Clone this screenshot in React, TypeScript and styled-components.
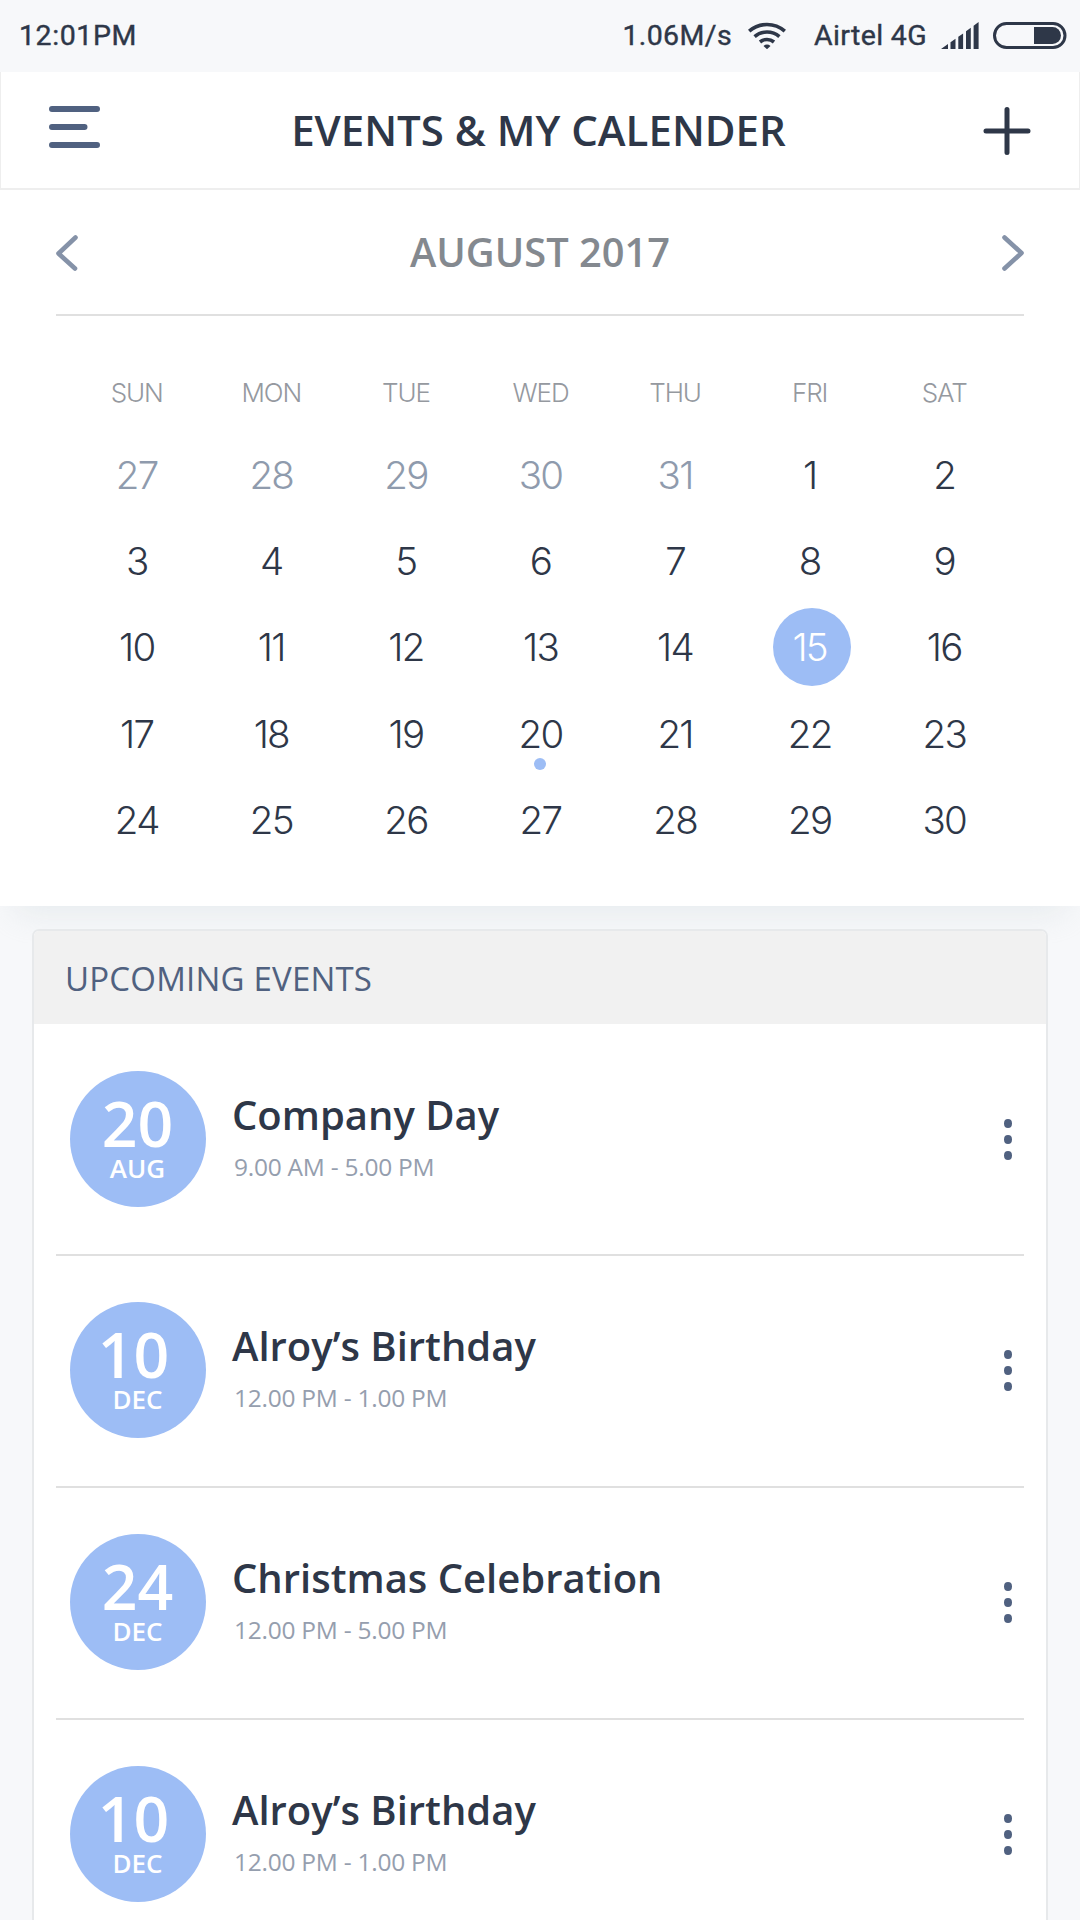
import React from "react";
import styled, { createGlobalStyle } from "styled-components";

const ink = "#2e3748";
const slate = "#506180";
const blue = "#9dbdf5";
const rule = "#e0e0e0";

const GlobalStyle = createGlobalStyle`
  * { box-sizing: border-box; }
  body {
    margin: 0;
    background: #f7f8fa;
    font-family: "Open Sans", "Noto Sans", sans-serif;
    color: ${ink};
  }
  button { border: 0; padding: 0; background: none; display: flex; font: inherit; color: inherit; }
  h1, h2, h3, p { margin: 0; }
`;

const Screen = styled.main`
  width: 1080px;
  height: 1920px;
  overflow: hidden;
  display: flex;
  flex-direction: column;
`;

const StatusBar = styled.div`
  height: 72px;
  flex: none;
  display: flex;
  align-items: center;
  padding: 0 13px 1px 19px;
  font: 400 28.5px/34px Roboto, sans-serif;
  -webkit-text-stroke: 0.4px ${ink};
`;

const Clock = styled.span`
  margin-right: auto;
  padding-top: 1px;
  letter-spacing: 0.6px;
`;

const StatusText = styled.span<{ $gap: number; $tracking: number }>`
  padding-top: 1px;
  margin-right: ${(p) => p.$gap}px;
  letter-spacing: ${(p) => p.$tracking}px;
`;

const StatusIcon = styled.svg<{ $gap: number }>`
  display: block;
  margin-right: ${(p) => p.$gap}px;
`;

const Header = styled.header`
  height: 118px;
  flex: none;
  display: flex;
  align-items: center;
  justify-content: space-between;
  padding: 0 48px;
  background: #fff;
  border: solid #eee;
  border-width: 0 1px 2px;
`;

const Title = styled.h1`
  margin-left: -6px;
  font-size: 42px;
  line-height: 56px;
  font-weight: 600;
`;

const Calendar = styled.section`
  height: 716px;
  flex: none;
  padding: 0 56px;
  background: #fff;
  box-shadow: 0 22px 30px -14px rgba(200, 212, 215, 0.32);
`;

const MonthBar = styled.div`
  height: 126px;
  display: flex;
  align-items: center;
  justify-content: space-between;
  border-bottom: 2px solid ${rule};
`;

const Month = styled.h2`
  font-size: 39.8px;
  line-height: 54px;
  font-weight: 600;
  color: #84898f;
`;

const Grid = styled.div`
  display: grid;
  grid-template-columns: repeat(7, 134.6px);
  grid-template-rows: 82px repeat(5, 86.2px);
  justify-content: center;
  margin: 34px -1px 0 0;
  font-family: Inter, sans-serif;
`;

const Weekday = styled.div`
  display: flex;
  align-items: center;
  justify-content: center;
  padding-top: 3px;
  font-size: 26px;
  font-weight: 300;
  letter-spacing: -1.1px;
  color: #95999f;
`;

const Day = styled.div<{ $muted: boolean; $selected: boolean }>`
  position: relative;
  width: 78px;
  height: 78px;
  margin: auto;
  display: flex;
  align-items: center;
  justify-content: center;
  border-radius: 50%;
  font-size: 38.5px;
  font-weight: 300;
  letter-spacing: -1.7px;
  color: ${(p) => (p.$selected ? "#fff" : p.$muted ? "#8f9bad" : ink)};
  background: ${(p) => (p.$selected ? blue : "transparent")};
  ${(p) => p.$selected && "translate: 2px 0; padding-right: 4px;"}
`;

const EventDot = styled.i`
  position: absolute;
  left: 32px;
  bottom: 3px;
  width: 12px;
  height: 12px;
  border-radius: 50%;
  background: ${blue};
`;

const Card = styled.section`
  flex: none;
  margin: 23px 32px 0;
  height: 1100px;
  background: #fff;
  border: 2px solid #e7e9eb;
  border-radius: 7px;
`;

const CardHeader = styled.h2`
  height: 93px;
  padding: 0 31px;
  border-radius: 5px 5px 0 0;
  background: #f1f1f1;
  font-size: 33px;
  line-height: 96px;
  font-weight: 400;
  letter-spacing: 0.2px;
  color: ${slate};
`;

const EventRow = styled.article`
  height: 232px;
  margin: 0 22px;
  padding: 0 12px 0 14px;
  display: flex;
  align-items: center;
  border-bottom: 2px solid ${rule};

  & + & {
    padding-bottom: 2px;
  }
`;

const DateBadge = styled.div`
  width: 136px;
  height: 136px;
  flex: none;
  border-radius: 50%;
  background: ${blue};
  color: #fff;
  display: flex;
  flex-direction: column;
  align-items: center;
  padding-top: 16px;
  font-weight: 600;
`;

const BadgeDay = styled.span<{ $shift: number }>`
  margin-left: ${(p) => p.$shift}px;
  font-size: 62.5px;
  line-height: 72px;
`;

const BadgeMonth = styled.span`
  margin-right: 1px;
  font-size: 26px;
  line-height: 19px;
`;

const EventText = styled.div`
  flex: 1;
  margin: 0 0 5px 26px;
`;

const EventName = styled.h3`
  font-size: 40px;
  line-height: 52px;
  font-weight: 600;
`;

const EventTime = styled.p`
  margin: 9px 0 0 2px;
  font-size: 24.5px;
  line-height: 34px;
  letter-spacing: -0.25px;
  color: #959eae;
`;

const MoreButton = styled.button`
  flex-direction: column;
  gap: 7px;
`;

const MoreDot = styled.span`
  width: 8.5px;
  height: 9px;
  border-radius: 50%;
  background: ${slate};
`;

const weekdays = ["SUN", "MON", "TUE", "WED", "THU", "FRI", "SAT"];
const days = [27, 28, 29, 30, 31, ...Array.from({ length: 30 }, (_, i) => i + 1)];

const events = [
  { day: "20", month: "AUG", name: "Company Day", time: "9.00 AM - 5.00 PM" },
  { day: "10", month: "DEC", name: "Alroy’s Birthday", time: "12.00 PM - 1.00 PM" },
  { day: "24", month: "DEC", name: "Christmas Celebration", time: "12.00 PM - 5.00 PM" },
  { day: "10", month: "DEC", name: "Alroy’s Birthday", time: "12.00 PM - 1.00 PM" },
];

const Wifi = () => (
  <StatusIcon $gap={28} width="38" height="27" viewBox="0 0 38 27" fill="none" stroke={ink} strokeWidth="3.6">
    <path d="M1.2 9.2a27 27 0 0 1 35.6 0" />
    <path d="M6.6 14.6a19 19 0 0 1 24.8 0" />
    <path d="M12 20a11 11 0 0 1 14 0" />
    <path d="M15.5 24a5.6 5.6 0 0 1 7 0L19 27.2z" fill={ink} stroke="none" />
  </StatusIcon>
);

const Signal = () => (
  <StatusIcon $gap={14} width="38" height="27" viewBox="0 0 38 27" fill={ink}>
    <path d="M0 27 7 22v5zM9.5 20.2l5-3.4V27h-5zM17.3 14.8l4.8-3.4V27h-4.8zM25 9.2l4.8-3.4V27H25zM32.6 3.7 37.6 0v27h-5z" />
  </StatusIcon>
);

const Battery = () => (
  <StatusIcon $gap={0} width="74" height="27" viewBox="0 0 74 27">
    <rect x="1.5" y="1.5" width="70.5" height="24" rx="12" fill="none" stroke={ink} strokeWidth="3" />
    <path d="M41 5h18.5a8.5 8.5 0 0 1 0 17H41z" fill={ink} />
  </StatusIcon>
);

const Chevron = ({ d }: { d: string }) => (
  <svg width="22" height="38" viewBox="0 0 22 38" fill="none" stroke="#8592a8" strokeWidth="4.6" strokeLinecap="round" strokeLinejoin="round">
    <path d={d} />
  </svg>
);

export default function App() {
  return (
    <Screen>
      <GlobalStyle />
      <StatusBar>
        <Clock>12:01PM</Clock>
        <StatusText $gap={16} $tracking={0.4}>1.06M/s</StatusText>
        <Wifi />
        <StatusText $gap={14} $tracking={0.35}>Airtel 4G</StatusText>
        <Signal />
        <Battery />
      </StatusBar>

      <Header>
        <button aria-label="Menu">
          <svg width="51" height="50" viewBox="0 0 51 50" stroke={slate} strokeWidth="6" strokeLinecap="round">
            <path d="M3 4h45M3 22h32.500M3 40h45" />
          </svg>
        </button>
        <Title>EVENTS &amp; MY CALENDER</Title>
        <button aria-label="Add event">
          <svg width="48" height="50" viewBox="0 0 48 50" stroke={ink} strokeWidth="5" strokeLinecap="round">
            <path d="M24 4.500v43M3 26h42" />
          </svg>
        </button>
      </Header>

      <Calendar>
        <MonthBar>
          <button aria-label="Previous month">
            <Chevron d="M19.500 4.500 2.500 20.500 19 35.500" />
          </button>
          <Month>AUGUST 2017</Month>
          <button aria-label="Next month">
            <Chevron d="M2.500 4.500 19.500 20 2.500 35.500" />
          </button>
        </MonthBar>
        <Grid>
          {weekdays.map((name) => (
            <Weekday key={name}>{name}</Weekday>
          ))}
          {days.map((day, i) => (
            <Day key={i} $muted={i < 5} $selected={i === 19}>
              {day}
              {i === 24 && <EventDot />}
            </Day>
          ))}
        </Grid>
      </Calendar>

      <Card>
        <CardHeader>UPCOMING EVENTS</CardHeader>
        {events.map((event, i) => (
          <EventRow key={i}>
            <DateBadge>
              <BadgeDay $shift={event.day.startsWith("1") ? -9 : -1}>{event.day}</BadgeDay>
              <BadgeMonth>{event.month}</BadgeMonth>
            </DateBadge>
            <EventText>
              <EventName>{event.name}</EventName>
              <EventTime>{event.time}</EventTime>
            </EventText>
            <MoreButton aria-label="Event options">
              <MoreDot />
              <MoreDot />
              <MoreDot />
            </MoreButton>
          </EventRow>
        ))}
      </Card>
    </Screen>
  );
}
